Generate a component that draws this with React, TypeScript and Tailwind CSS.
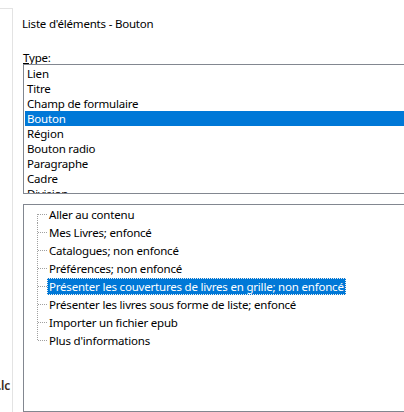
import React from 'react';

const types = ['Lien', 'Titre', 'Champ de formulaire', 'Bouton', 'Région', 'Bouton radio', 'Paragraphe', 'Cadre', 'Division'];

const items = [
    'Aller au contenu',
    'Mes Livres; enfoncé',
    'Catalogues; non enfoncé',
    'Préférences; non enfoncé',
    'Présenter les couvertures de livres en grille; non enfoncé',
    'Présenter les livres sous forme de liste; enfoncé',
    'Importer un fichier epub',
    "Plus d'informations",
];

const TreeLines: React.FC<{ first: boolean; last: boolean }> = ({ first, last }) => (
    <svg width="23" height="18" className="shrink-0" shapeRendering="crispEdges">
        <line x1="13.5" y1={first ? 9 : 0} x2="13.5" y2={last ? 10 : 18} stroke="#a0a0a0" strokeDasharray="1 1" />
        <line x1="14" y1="9.5" x2="23" y2="9.5" stroke="#a0a0a0" strokeDasharray="1 1" />
    </svg>
);

export default function App() {
    return (
        <div className="w-[404px] h-[412px] bg-white overflow-hidden flex text-black text-[11.5px] tracking-[-0.2px] leading-[15px] font-['Noto_Sans',sans-serif]">
            <div className="w-[13px] h-[404px] mt-[8px] border-t border-r border-[#e3e3e3] shrink-0 flex flex-col justify-end overflow-hidden">
                <div className="h-[34px] -ml-[2px] text-[12px] text-[#3b2a1a] font-semibold whitespace-nowrap">.lc</div>
            </div>

            <div className="flex-1 flex flex-col pt-[16px] min-w-0">
                <div className="pl-[9px] h-[15px] whitespace-nowrap">Liste d'éléments - Bouton</div>

                <div className="pl-[10px] mt-[19px] h-[14px] whitespace-nowrap">
                    <span className="underline">T</span>ype:
                </div>

                <div className="ml-[10px] w-[420px] h-[130px] border border-[#828790] pt-[1px] pl-[1px] overflow-hidden shrink-0">
                    {types.map((t) => (
                        <div
                            key={t}
                            className={`h-[15px] pl-[2px] whitespace-nowrap ${t === 'Bouton' ? 'bg-[#0078d7] text-white' : ''}`}
                        >
                            {t}
                        </div>
                    ))}
                </div>

                <div className="ml-[10px] mt-[10px] w-[420px] flex-1 border border-[#828790] overflow-hidden">
                    {items.map((t, i) => {
                        const selected = i === 4;
                        return (
                            <div key={t} className="h-[18px] flex items-center">
                                <TreeLines first={i === 0} last={i === items.length - 1} />
                                <span
                                    className={`whitespace-nowrap px-[1px] h-[17px] leading-[15px] border border-dotted ${
                                        selected ? 'bg-[#0078d7] text-white border-[#f0f0f0]' : 'border-transparent'
                                    }`}
                                >
                                    {t}
                                </span>
                            </div>
                        );
                    })}
                </div>
            </div>
        </div>
    );
}
